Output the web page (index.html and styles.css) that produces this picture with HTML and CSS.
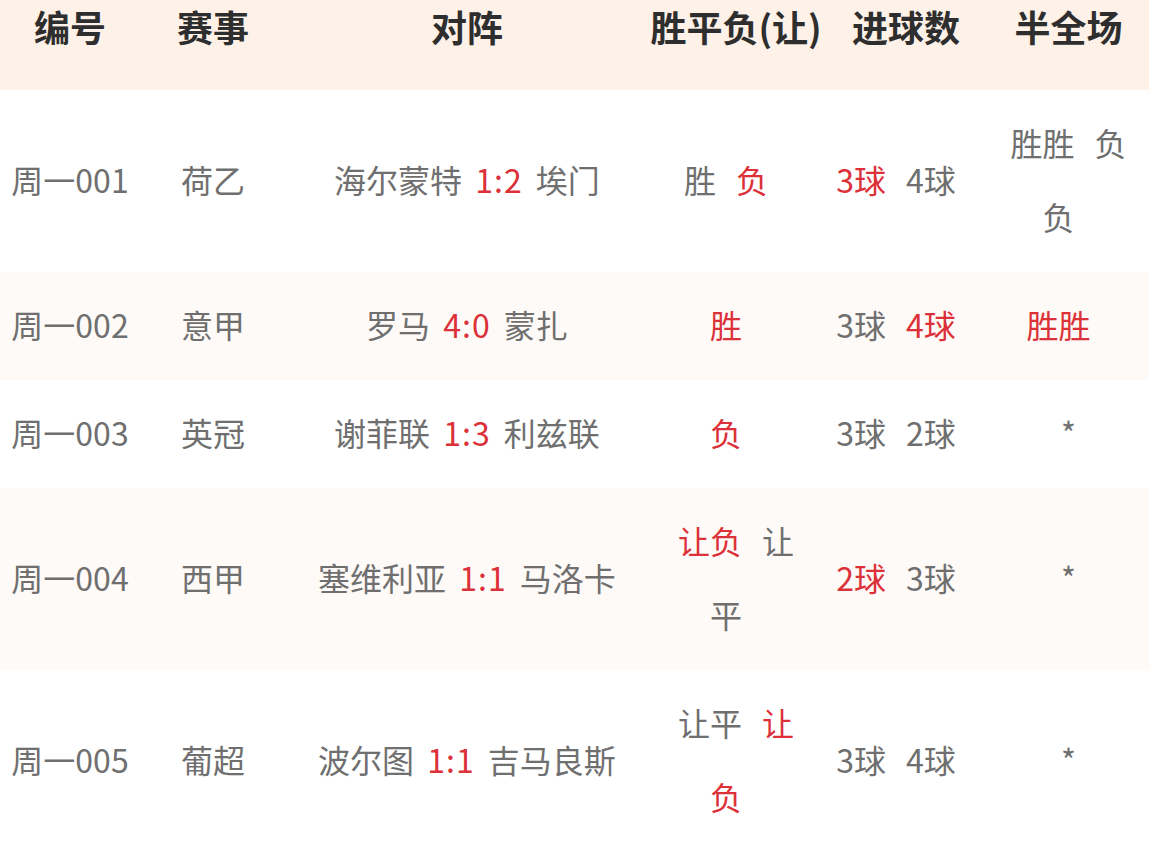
FILE: index.html
```html
<!DOCTYPE html>
<html lang="zh-CN">
<head>
<meta charset="utf-8">
<title>开奖结果</title>
<link rel="stylesheet" href="styles.css">
</head>
<body>
<table class="results">
  <colgroup>
    <col class="c-no">
    <col class="c-league">
    <col class="c-match">
    <col class="c-wdl">
    <col class="c-goals">
    <col class="c-half">
  </colgroup>
  <thead>
    <tr>
      <th>编号</th>
      <th>赛事</th>
      <th>对阵</th>
      <th>胜平负(让)</th>
      <th>进球数</th>
      <th>半全场</th>
    </tr>
  </thead>
  <tbody>
    <tr>
      <td>周一001</td>
      <td>荷乙</td>
      <td>海尔蒙特 <span class="score">1:2</span> 埃门</td>
      <td class="narrow"><span class="pick">胜</span><span class="pick hit">负</span></td>
      <td><span class="pick hit">3球</span><span class="pick">4球</span></td>
      <td class="narrow"><span class="pick">胜胜</span><span class="pick">负负</span></td>
    </tr>
    <tr class="alt">
      <td>周一002</td>
      <td>意甲</td>
      <td>罗马 <span class="score">4:0</span> 蒙扎</td>
      <td class="narrow"><span class="pick hit">胜</span></td>
      <td><span class="pick">3球</span><span class="pick hit">4球</span></td>
      <td class="narrow"><span class="pick hit">胜胜</span></td>
    </tr>
    <tr>
      <td>周一003</td>
      <td>英冠</td>
      <td>谢菲联 <span class="score">1:3</span> 利兹联</td>
      <td class="narrow"><span class="pick hit">负</span></td>
      <td><span class="pick">3球</span><span class="pick">2球</span></td>
      <td class="narrow">*</td>
    </tr>
    <tr class="alt">
      <td>周一004</td>
      <td>西甲</td>
      <td>塞维利亚 <span class="score">1:1</span> 马洛卡</td>
      <td class="narrow"><span class="pick hit">让负</span><span class="pick">让平</span></td>
      <td><span class="pick hit">2球</span><span class="pick">3球</span></td>
      <td class="narrow">*</td>
    </tr>
    <tr>
      <td>周一005</td>
      <td>葡超</td>
      <td>波尔图 <span class="score">1:1</span> 吉马良斯</td>
      <td class="narrow"><span class="pick">让平</span><span class="pick hit">让负</span></td>
      <td><span class="pick">3球</span><span class="pick">4球</span></td>
      <td class="narrow">*</td>
    </tr>
  </tbody>
</table>
</body>
</html>
```

FILE: styles.css
```css
html, body {
  margin: 0;
  padding: 0;
  background: #ffffff;
}

body {
  font-family: "Noto Sans CJK SC", "Noto Sans", sans-serif;
  font-size: 32px;
  color: #6f6f6f;
}

.results {
  width: 1149px;
  border-collapse: collapse;
  border-spacing: 0;
  table-layout: fixed;
}

.c-no { width: 140px; }
.c-league { width: 146px; }
.c-match { width: 362px; }
.c-wdl { width: 176px; }
.c-goals { width: 164px; }
.c-half { width: 161px; }

.results thead tr {
  background: #fef1e8;
}

.results th {
  font-size: 36px;
  font-weight: 700;
  color: #2e2e2e;
  text-align: center;
  vertical-align: top;
  line-height: 44px;
  padding: 4px 0 42px;
  white-space: nowrap;
}

.results td {
  text-align: center;
  vertical-align: middle;
  line-height: 74px;
  padding: 15px 0 19px;
}

.results td.narrow {
  padding-left: 20px;
  padding-right: 20px;
}

.results tr.alt {
  background: #fefaf7;
}

.score {
  color: #dc3139;
  margin: 0 6px;
  letter-spacing: 1px;
}

.pick {
  margin-right: 20px;
}

.pick.hit {
  color: #dc3139;
}
```
